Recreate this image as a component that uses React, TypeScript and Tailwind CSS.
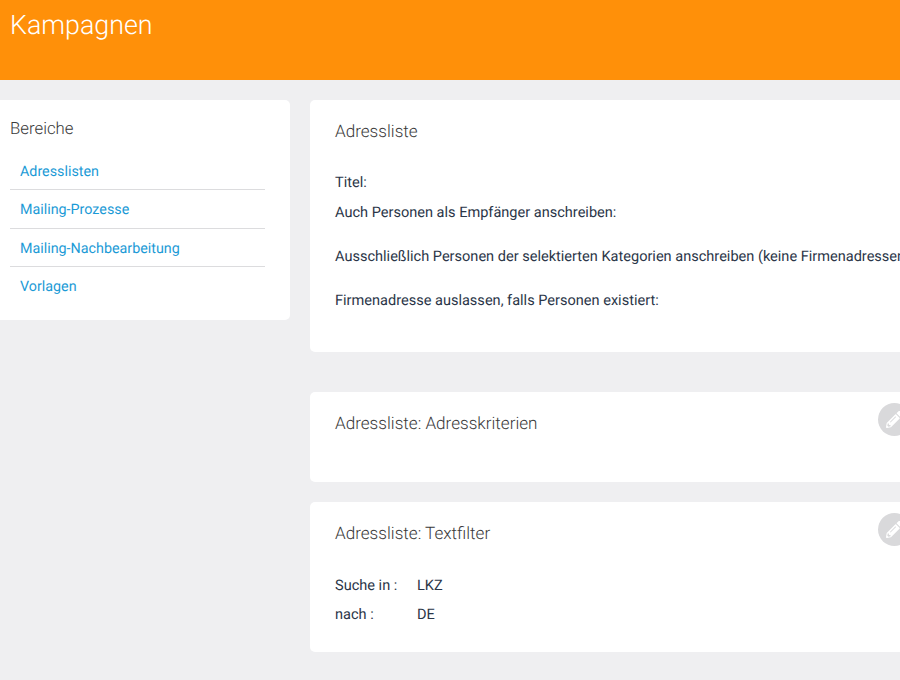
import { FaPencilAlt } from "react-icons/fa";

const links = ["Adresslisten", "Mailing-Prozesse", "Mailing-Nachbearbeitung", "Vorlagen"];

const EditButton = () => (
  <div className="absolute right-[-11px] top-[11px] flex h-[33px] w-[33px] items-center justify-center rounded-full bg-[#d9d9db]">
    <FaPencilAlt className="h-[17px] w-[17px] text-white" />
  </div>
);

const App = () => {
  return (
    <div className="h-[680px] w-[900px] overflow-hidden bg-[#efeff1] font-['Roboto',sans-serif] text-[14.55px] text-[#2b3648] antialiased [text-rendering:geometricPrecision]">
      <header className="h-[80px] bg-[#ff9009] px-[10px] pt-[7px]">
        <h1 className="text-[26.8px] leading-[36px] font-light text-white">Kampagnen</h1>
      </header>

      <div className="flex items-start gap-[20px] pt-[20px]">
        {/* Left - Bereiche */}
        <aside className="h-[220px] w-[290px] shrink-0 rounded-r-[5px] bg-white pt-[19px] pl-[10px]">
          <h2 className="text-[16.8px] leading-[21px] font-light text-[#3a3a3a]">Bereiche</h2>
          <ul className="mt-[12px] w-[255px]">
            {links.map((link, i) => (
              <li key={link} className={i < 3 ? "h-[38.4px] border-b border-[#dcdcde] pt-[9px] pl-[10px]" : "pt-[9px] pl-[10px]"}>
                <a className="text-[14.3px] leading-[20px] text-[#1b9ad6]">{link}</a>
              </li>
            ))}
          </ul>
        </aside>

        {/* Right - Adressliste */}
        <main className="flex w-[590px] shrink-0 flex-col">
          <section className="h-[252px] w-[600px] rounded-l-[5px] bg-white px-[25px] pt-[22px]">
            <h2 className="text-[17.1px] leading-[21px] font-light text-[#3a3a3a]">Adressliste</h2>
            <p className="mt-[30px] leading-[20px]">Titel:</p>
            <p className="mt-[10px] leading-[20px]">Auch Personen als Empfänger anschreiben:</p>
            <p className="mt-[24px] leading-[20px] whitespace-nowrap">
              Ausschließlich Personen der selektierten Kategorien anschreiben (keine Firmenadressen):
            </p>
            <p className="mt-[24px] leading-[20px]">Firmenadresse auslassen, falls Personen existiert:</p>
          </section>

          <section className="relative mt-[40px] h-[90px] rounded-l-[5px] bg-white px-[25px] pt-[22px]">
            <h2 className="text-[17.1px] leading-[21px] font-light text-[#3a3a3a]">Adressliste: Adresskriterien</h2>
            <EditButton />
          </section>

          <section className="relative mt-[20px] h-[150px] rounded-l-[5px] bg-white px-[25px] pt-[22px]">
            <h2 className="text-[17.1px] leading-[21px] font-light text-[#3a3a3a]">Adressliste: Textfilter</h2>
            <EditButton />
            <div className="mt-[31px] grid grid-cols-[82px_1fr] gap-y-[9px] leading-[20px]">
              <span>Suche in :</span>
              <span>LKZ</span>
              <span>nach :</span>
              <span>DE</span>
            </div>
          </section>
        </main>
      </div>
    </div>
  );
};

export default App;
